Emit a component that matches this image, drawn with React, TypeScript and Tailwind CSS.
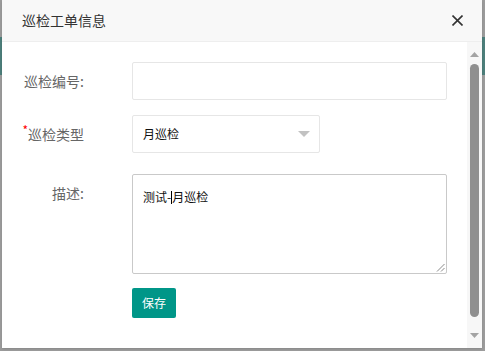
import { ReactNode } from "react";

const font = { fontFamily: '"Noto Sans CJK SC", "Noto Sans", sans-serif' };

function Row({
  label,
  required,
  top,
  children,
}: {
  label: string;
  required?: boolean;
  top?: boolean;
  children: ReactNode;
}) {
  return (
    <div className={`flex ${top ? "items-start" : "items-center"}`}>
      <label
        className={`w-[82px] text-right text-[14px] leading-[20px] text-[#666] ${top ? "pt-[9px]" : ""}`}
      >
        {required && <span className="relative top-[-5px] text-[12px] leading-none text-[#f00]">*</span>}
        {label}
      </label>
      <div className="ml-[48px]">{children}</div>
    </div>
  );
}

export default function App() {
  return (
    <div style={font} className="relative w-[485px] h-[351px] overflow-hidden bg-[#9c9c9c]">
      {/* backdrop bits peeking out */}
      <div className="absolute left-0 top-[37px] w-[2px] h-[38px] bg-[#4d7f7b]" />
      <div className="absolute right-0 top-[37px] w-[3px] h-[38px] bg-[#4d7f7b]" />

      <div className="absolute left-[2px] top-0 w-[480px] h-[348px] flex flex-col bg-white shadow">
        <div className="h-[42px] shrink-0 flex items-center justify-between bg-[#f8f8f8] border-b border-[#eee] pl-[20px] pr-[19px]">
          <span className="text-[14px] text-[#333]">巡检工单信息</span>
          <svg width="11" height="11" viewBox="0 0 11 11">
            <path d="M0.5 0.5 L10.5 10.5 M10.5 0.5 L0.5 10.5" stroke="#333" strokeWidth="1.6" />
          </svg>
        </div>

        <div className="flex-1 flex min-h-0">
          <div className="flex-1 pt-[20px] flex flex-col">
            <Row label="巡检编号:">
              <div className="w-[315px] h-[38px] border border-[#e6e6e6] rounded-[2px] bg-white" />
            </Row>

            <div className="mt-[15px]">
              <Row label="巡检类型" required>
                <div className="w-[188px] h-[38px] border border-[#e6e6e6] rounded-[2px] bg-white flex items-center justify-between pl-[10px] pr-[9px]">
                  <span className="text-[12px] text-[#111]">月巡检</span>
                  <svg width="12" height="6" viewBox="0 0 12 6">
                    <path d="M0 0 L12 0 L6 6 Z" fill="#c2c2c2" />
                  </svg>
                </div>
              </Row>
            </div>

            <div className="mt-[21px]">
              <Row label="描述:" top>
                <div className="relative w-[315px] h-[100px] border border-[#c9c9c9] rounded-[2px] bg-white pl-[10px] pt-[8px]">
                  <span className="text-[12px] leading-[20px] text-[#111]">
                    测试-<span className="inline-block w-px h-[13px] bg-black align-[-2px]" />月巡检
                  </span>
                  <svg className="absolute right-[1px] bottom-[1px]" width="9" height="9" viewBox="0 0 9 9">
                    <path d="M8.5 1 L1 8.5 M8.5 5 L5 8.5" stroke="#8a8a8a" strokeWidth="1" />
                  </svg>
                </div>
              </Row>
            </div>

            <div className="mt-[14px] pl-[130px]">
              <button className="w-[44px] h-[30px] rounded-[2px] bg-[#009688] text-white text-[12px]">
                保存
              </button>
            </div>
          </div>

          <div className="w-[15px] shrink-0 bg-[#f7f7f7] flex flex-col items-center">
            <svg className="mt-[10px]" width="9" height="5" viewBox="0 0 9 5">
              <path d="M4.5 0 L9 5 L0 5 Z" fill="#a3a3a3" />
            </svg>
            <div className="mt-[7px] w-[9px] h-[253px] rounded-full bg-[#8f8f8f]" />
            <svg className="mt-[16px]" width="9" height="5" viewBox="0 0 9 5">
              <path d="M0 0 L9 0 L4.5 5 Z" fill="#a3a3a3" />
            </svg>
          </div>
        </div>
      </div>
    </div>
  );
}
